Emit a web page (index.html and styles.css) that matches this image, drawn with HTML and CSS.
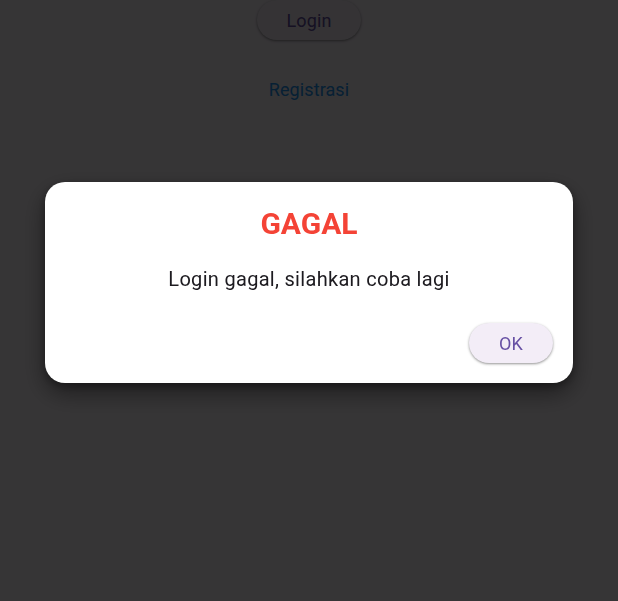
FILE: index.html
```html
<!DOCTYPE html>
<html lang="id">
<head>
<meta charset="utf-8">
<title>Login</title>
<link rel="stylesheet" href="styles.css">
</head>
<body>
  <main class="page">
    <button class="login-btn" type="button">Login</button>
    <button class="link-btn" type="button">Registrasi</button>
  </main>
  <div class="scrim">
    <div class="dialog" role="alertdialog" aria-labelledby="dlg-title">
      <h2 class="dialog-title" id="dlg-title">GAGAL</h2>
      <p class="dialog-body">Login gagal, silahkan coba lagi</p>
      <div class="dialog-actions">
        <button class="ok-btn" type="button">OK</button>
      </div>
    </div>
  </div>
</body>
</html>
```

FILE: styles.css
```css
* { box-sizing: border-box; }

html, body {
  margin: 0;
  height: 100%;
}

body {
  background: #fef7ff;
  font-family: Roboto, "Noto Sans", "Liberation Sans", sans-serif;
  overflow: hidden;
}

.page {
  display: flex;
  flex-direction: column;
  align-items: center;
}

.login-btn {
  width: 104px;
  height: 40px;
  border: none;
  border-radius: 20px;
  background: #f7f2fa;
  color: #6750a4;
  font-family: inherit;
  font-size: 18px;
  letter-spacing: 0.1px;
  box-shadow: 0 1px 3px rgba(0, 0, 0, 0.3), 0 1px 2px rgba(0, 0, 0, 0.15);
  padding: 0;
}

.link-btn {
  margin-top: 29px;
  height: 40px;
  padding: 0 12px;
  border: none;
  background: transparent;
  color: #2196f3;
  font-family: inherit;
  font-size: 18px;
  letter-spacing: 0.1px;
}

.scrim {
  position: fixed;
  inset: 0;
  background: rgba(0, 0, 0, 0.79);
  display: flex;
  justify-content: center;
  align-items: flex-start;
  padding-top: 182px;
}

.dialog {
  width: 528px;
  background: #ffffff;
  border-radius: 20px;
  padding: 24px 20px 20px;
  display: flex;
  flex-direction: column;
  box-shadow: 0 10px 24px rgba(0, 0, 0, 0.45), 0 3px 8px rgba(0, 0, 0, 0.3);
}

.dialog-title {
  margin: 0;
  text-align: center;
  color: #f44336;
  font-size: 30px;
  font-weight: 700;
  line-height: 35px;
}

.dialog-body {
  margin: 27px 0 0;
  text-align: center;
  color: #1d1b20;
  font-size: 20px;
  letter-spacing: 0.3px;
  line-height: 23px;
}

.dialog-actions {
  margin-top: 32px;
  display: flex;
  justify-content: flex-end;
}

.ok-btn {
  width: 84px;
  height: 40px;
  border: none;
  border-radius: 20px;
  background: #f3edf7;
  color: #6750a4;
  font-family: inherit;
  font-size: 18px;
  letter-spacing: 0.1px;
  padding: 0;
  box-shadow: 0 1px 3px rgba(0, 0, 0, 0.3), 0 1px 2px rgba(0, 0, 0, 0.15);
}
```
